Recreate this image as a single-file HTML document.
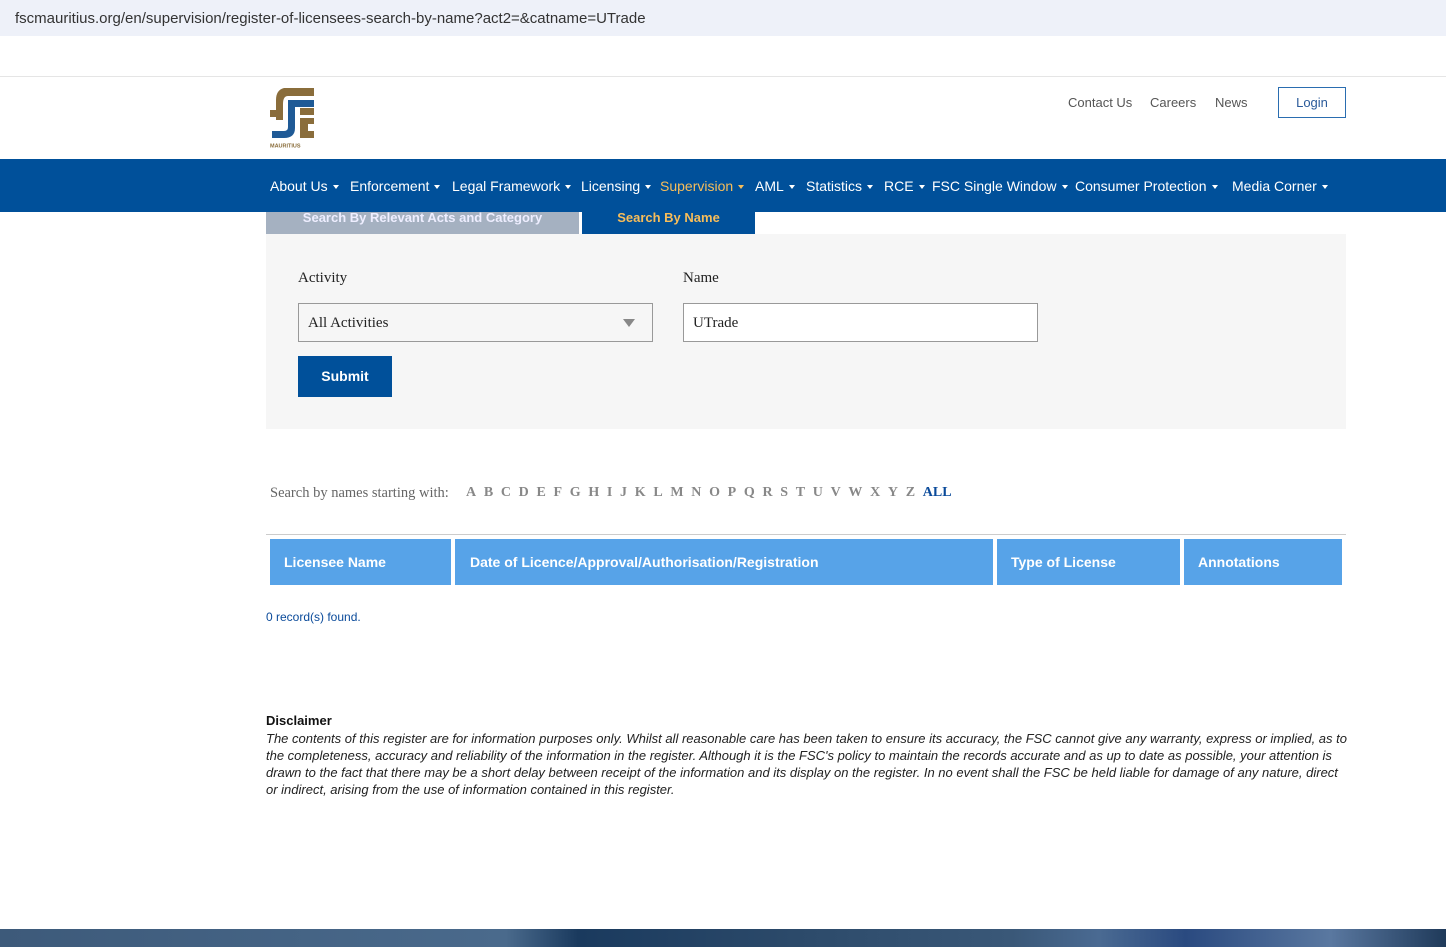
<!DOCTYPE html>
<html><head><meta charset="utf-8"><style>
body{margin:0;width:1446px;height:947px;position:relative;background:#fff;font-family:"Liberation Sans",sans-serif;overflow:hidden}
.a{position:absolute;white-space:nowrap}
.nav{position:absolute;left:0;top:159px;width:1446px;height:53px;background:#00509a}
.nav span{position:absolute;top:19px;color:#fff;font-size:14px}
.nav span:after{content:"";display:inline-block;margin-left:5px;border-left:3.5px solid transparent;border-right:3.5px solid transparent;border-top:4px solid currentColor;vertical-align:middle}
.th{position:absolute;top:539px;height:46px;background:#57a3e8;color:#fff;font-weight:bold;font-size:14px;line-height:46px;padding-left:14px;box-sizing:border-box}
.serif{font-family:"Liberation Serif",serif}
.let span{margin-right:7.7px}
</style></head><body>
<div class="a" style="left:0;top:0;width:1446px;height:36px;background:#eef1f9"></div>
<div class="a" style="left:15px;top:10px;font-size:15px;color:#333">fscmauritius.org/en/supervision/register-of-licensees-search-by-name?act2=&amp;catname=UTrade</div>
<div class="a" style="left:0;top:76px;width:1446px;height:1px;background:#e5e5e5"></div>
<svg class="a" style="left:268px;top:86px" width="50" height="64" viewBox="0 0 50 64">
<path d="M8 34 V14 Q8 4 16 2 H46 V10 H20 Q15 10 15 18 V34 Z" fill="#8a6d3b"/>
<path d="M2 24 H15 V31 H2 Z M32 22 H46 V29 H32Z" fill="#8a6d3b"/>
<path d="M20 14 H46 V21 H27 V42 Q27 52 16 52 H4 V45 H16 Q20 45 20 41 Z" fill="#1f5a96"/>
<path d="M32 32 H46 V38 H40 V45 H46 V52 H32Z" fill="#8a6d3b"/>
<text x="2" y="61.5" font-size="5.5" font-weight="bold" fill="#8a6d3b" font-family="Liberation Sans">MAURITIUS</text>
</svg>
<div class="a" style="left:1068px;top:95px;font-size:13px;color:#555">Contact Us</div>
<div class="a" style="left:1150px;top:95px;font-size:13px;color:#555">Careers</div>
<div class="a" style="left:1215px;top:95px;font-size:13px;color:#555">News</div>
<div class="a" style="left:1278px;top:87px;width:66px;height:29px;border:1px solid #2a6db0;color:#2a5a9a;font-size:13px;text-align:center;line-height:29px">Login</div>
<div class="nav">
<span style="left:270px">About Us</span><span style="left:350px">Enforcement</span><span style="left:452px">Legal Framework</span><span style="left:581px">Licensing</span><span style="left:660px;color:#f7bd5a">Supervision</span><span style="left:755px">AML</span><span style="left:806px">Statistics</span><span style="left:884px">RCE</span><span style="left:932px">FSC Single Window</span><span style="left:1075px">Consumer Protection</span><span style="left:1232px">Media Corner</span>
</div>
<div class="a" style="left:266px;top:212px;width:313px;height:22px;background:#a5b1c1;color:#eef;font-weight:bold;font-size:13px;text-align:center;line-height:12px">Search By Relevant Acts and Category</div>
<div class="a" style="left:582px;top:212px;width:173px;height:22px;background:#00509a;color:#f7bd5a;font-weight:bold;font-size:13px;text-align:center;line-height:12px">Search By Name</div>
<div class="a" style="left:266px;top:234px;width:1080px;height:195px;background:#f6f6f6"></div>
<div class="a serif" style="left:298px;top:270px;font-size:15px;color:#222">Activity</div>
<div class="a serif" style="left:683px;top:270px;font-size:15px;color:#222">Name</div>
<div class="a" style="left:298px;top:303px;width:353px;height:37px;border:1px solid #999;background:#f6f6f6"></div>
<div class="a serif" style="left:308px;top:315px;font-size:15px;color:#222">All Activities</div>
<div class="a" style="left:623px;top:319px;border-left:6px solid transparent;border-right:6px solid transparent;border-top:8px solid #888"></div>
<div class="a" style="left:683px;top:303px;width:353px;height:37px;border:1px solid #999;background:#fff"></div>
<div class="a serif" style="left:693px;top:315px;font-size:15px;color:#222">UTrade</div>
<div class="a" style="left:298px;top:356px;width:94px;height:41px;background:#00509a;color:#fff;font-weight:bold;font-size:14px;text-align:center;line-height:41px">Submit</div>
<div class="a serif" style="left:270px;top:485px;font-size:14.5px;color:#666">Search by names starting with:</div>
<div class="a serif let" style="left:466px;top:485px;font-size:14px;font-weight:bold;color:#888"><span>A</span><span>B</span><span>C</span><span>D</span><span>E</span><span>F</span><span>G</span><span>H</span><span>I</span><span>J</span><span>K</span><span>L</span><span>M</span><span>N</span><span>O</span><span>P</span><span>Q</span><span>R</span><span>S</span><span>T</span><span>U</span><span>V</span><span>W</span><span>X</span><span>Y</span><span>Z</span><span style="color:#0a4a9a">ALL</span></div>
<div class="a" style="left:266px;top:534px;width:1080px;height:1px;background:#ccc"></div>
<div class="th" style="left:270px;width:181px">Licensee Name</div>
<div class="th" style="left:455px;width:538px;padding-left:15px">Date of Licence/Approval/Authorisation/Registration</div>
<div class="th" style="left:997px;width:183px">Type of License</div>
<div class="th" style="left:1184px;width:158px">Annotations</div>
<div class="a" style="left:266px;top:610px;font-size:12px;color:#0a4a9a">0 record(s) found.</div>
<div class="a" style="left:266px;top:713px;font-size:13px;font-weight:bold;color:#111">Disclaimer</div>
<div class="a" style="left:266px;top:730px;width:1082px;font-size:13px;font-style:italic;color:#222;line-height:17px;white-space:normal">The contents of this register are for information purposes only. Whilst all reasonable care has been taken to ensure its accuracy, the FSC cannot give any warranty, express or implied, as to the completeness, accuracy and reliability of the information in the register. Although it is the FSC's policy to maintain the records accurate and as up to date as possible, your attention is drawn to the fact that there may be a short delay between receipt of the information and its display on the register. In no event shall the FSC be held liable for damage of any nature, direct or indirect, arising from the use of information contained in this register.</div>
<div class="a" style="left:0;top:929px;width:1446px;height:18px;background:linear-gradient(90deg,#3d5a7a,#4a6a8c 35%,#1a3a5e 40%,#2c4a6a 55%,#3a5878 70%,#4a6a92 76%,#2a4a80 82%,#5a78a0 92%,#1f3a5a)"></div>
</body></html>
